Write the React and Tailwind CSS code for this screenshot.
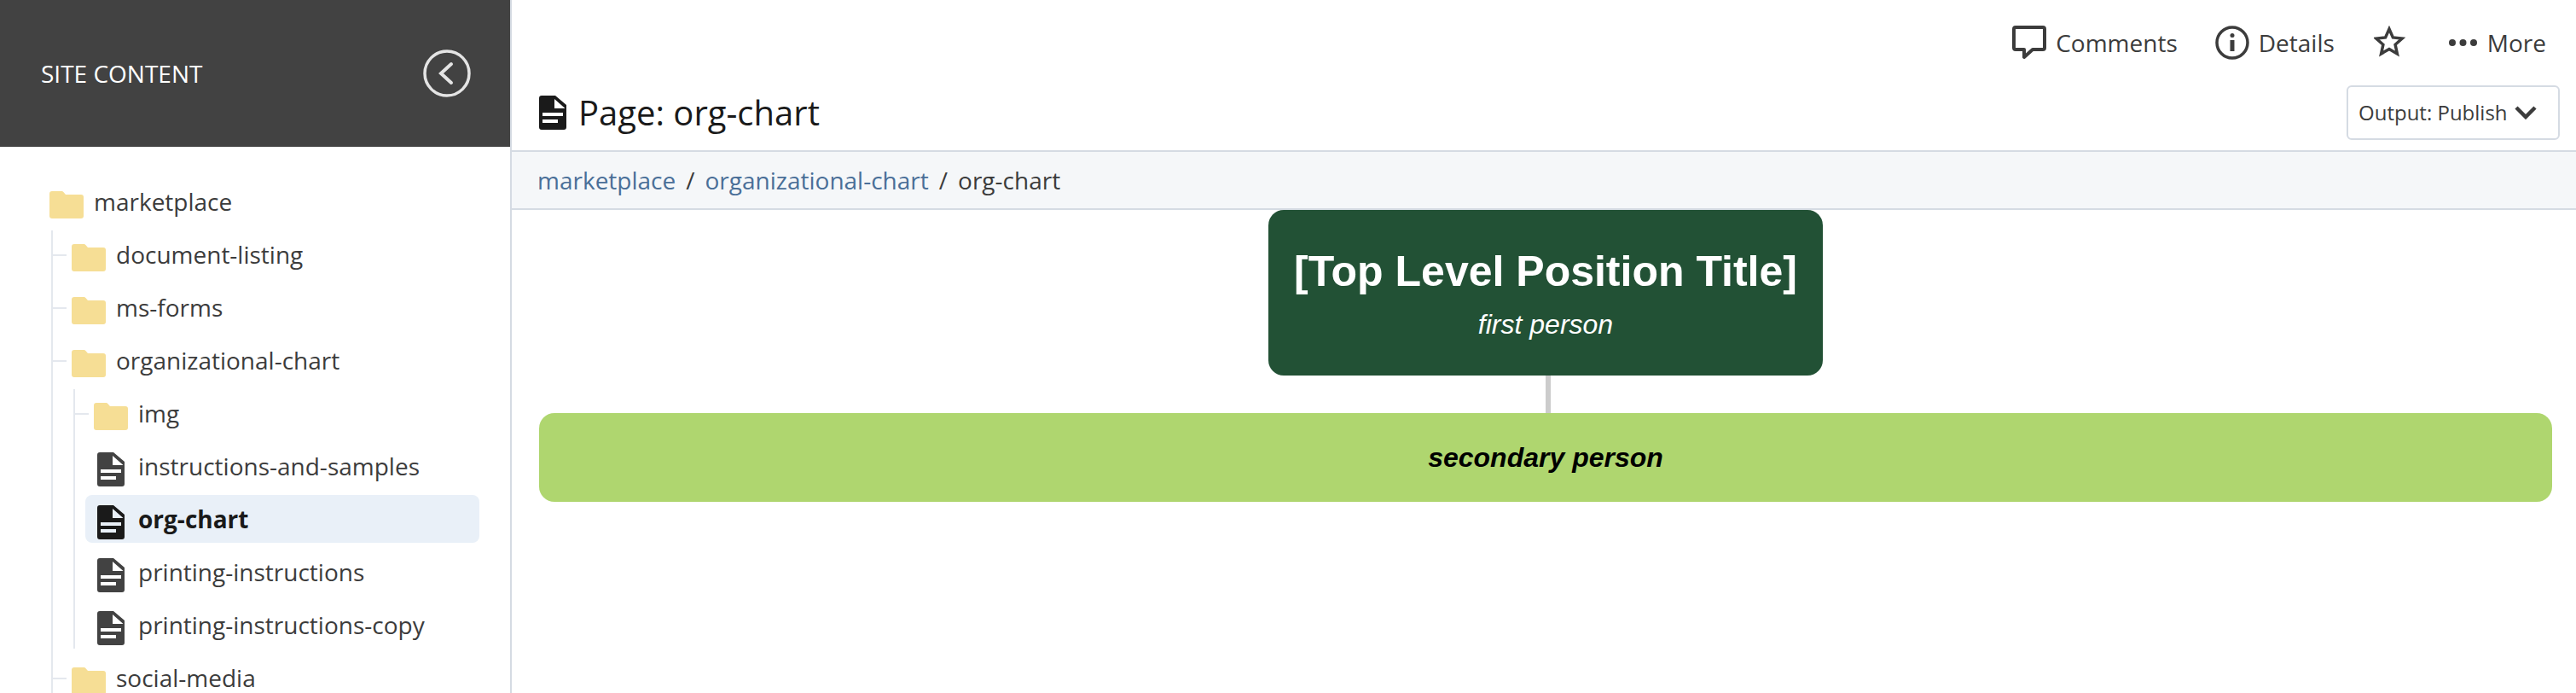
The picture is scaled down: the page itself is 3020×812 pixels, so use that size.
import React from 'react';

const FolderIcon = () => (
  <svg className="w-10 h-8 mt-[8px] shrink-0" viewBox="0 0 40 32" fill="#f6de95">
    <path d="M3 0h11c1 0 2 .4 2.6 1.2L19 4h18a3 3 0 013 3v22a3 3 0 01-3 3H3a3 3 0 01-3-3V3a3 3 0 013-3z" />
  </svg>
);

const FileIcon = ({ color = '#424242', className = 'mt-[8px]' }) => (
  <svg className={`w-8 h-10 shrink-0 ${className}`} viewBox="0 0 32 40" fill={color}>
    <path
      fillRule="evenodd"
      d="M3 0H19L32 11V37a3 3 0 01-3 3H3a3 3 0 01-3-3V3a3 3 0 013-3zM18 4V15H30.500zM4 20v4h24v-4zM4 28v4h18v-4z"
    />
  </svg>
);

const Row = ({ type, label, active }) => (
  <div className={`flex items-center h-[56px] ${active ? 'font-bold text-[#1a1a1a]' : 'text-[#3c3c3c]'}`}>
    {type === 'folder' ? <FolderIcon /> : <FileIcon color={active ? '#1a1a1a' : '#424242'} />}
    <span className={type === 'folder' ? 'ml-3' : 'ml-4'}>{label}</span>
  </div>
);

// one branch of the tree, with its tick mark going back to the parent's line
const Branch = ({ children }) => (
  <li className="relative mt-[6px] first:mt-0">
    <span className="absolute left-0 top-[28px] w-[16px] h-[2px] bg-[#e4e8ee]" />
    {children}
  </li>
);

const Tree = () => (
  <div className="pl-[58px] pt-[36px] text-[28px] leading-[56px]">
    <Row type="folder" label="marketplace" />
    <ul className="ml-[2px] mt-[6px] border-l-2 border-[#e4e8ee]">
      {['document-listing', 'ms-forms'].map((name) => (
        <Branch key={name}>
          <div className="pl-[22px]"><Row type="folder" label={name} /></div>
        </Branch>
      ))}
      <Branch>
        <div className="pl-[22px]"><Row type="folder" label="organizational-chart" /></div>
        <ul className="ml-[24px] mt-[6px] border-l-2 border-[#e4e8ee]">
          <Branch><div className="pl-[22px]"><Row type="folder" label="img" /></div></Branch>
          <li className="mt-[6px] pl-[26px]"><Row type="file" label="instructions-and-samples" /></li>
          <li className="mt-[6px] pl-[12px]">
            <div className="w-[462px] pl-[14px] rounded-lg bg-[#e9f0f8]"><Row type="file" label="org-chart" active /></div>
          </li>
          <li className="mt-[6px] pl-[26px]"><Row type="file" label="printing-instructions" /></li>
          <li className="mt-[6px] pl-[26px]"><Row type="file" label="printing-instructions-copy" /></li>
        </ul>
      </Branch>
      <Branch>
        <div className="pl-[22px]"><Row type="folder" label="social-media" /></div>
      </Branch>
    </ul>
  </div>
);

const Sidebar = () => (
  <aside className="w-[600px] h-full shrink-0 flex flex-col border-r-2 border-[#d5dbe3] overflow-hidden">
    <div className="w-[600px] h-[172px] shrink-0 bg-[#424242] flex items-center justify-between pl-[48px] pr-[48px]">
      <span className="text-white text-[28px]">SITE CONTENT</span>
      <svg className="w-[56px] h-[56px]" viewBox="0 0 56 56" fill="none" stroke="#e4e4e4" strokeWidth="3.5" strokeLinecap="round">
        <circle cx="28" cy="28" r="26" />
        <path d="M33 17L21 28l12 11" strokeWidth="4" />
      </svg>
    </div>
    <div className="flex-1 min-h-0 overflow-hidden"><Tree /></div>
  </aside>
);

const Action = ({ icon, label, gap }) => (
  <div className={`flex items-center ${gap}`}>
    {icon}
    <span>{label}</span>
  </div>
);

const Header = () => (
  <header className="h-[176px] shrink-0 flex flex-col text-[#3c3c3c]">
    <div className="flex justify-end items-center pt-[30px] pr-[35px] text-[28px] leading-[40px]">
      <Action
        gap="gap-[11px]"
        label="Comments"
        icon={
          <svg className="w-[40px] h-[40px]" viewBox="0 0 40 40" fill="none" stroke="#3c3c3c" strokeWidth="4" strokeLinejoin="round">
            <path d="M4 2h32a2 2 0 012 2v22a2 2 0 01-2 2H24l-10 9v-9H4a2 2 0 01-2-2V4a2 2 0 012-2z" />
          </svg>
        }
      />
      <div className="ml-[44px]">
        <Action
          gap="gap-[11px]"
          label="Details"
          icon={
            <svg className="w-[40px] h-[40px]" viewBox="0 0 40 40" fill="none" stroke="#3c3c3c" strokeWidth="3.5">
              <circle cx="20" cy="20" r="18" />
              <circle cx="20" cy="11.5" r="2.5" fill="#3c3c3c" stroke="none" />
              <path d="M20 17v13" strokeWidth="5" />
            </svg>
          }
        />
      </div>
      <svg className="w-[40px] h-[40px] ml-[46px] mr-[48px]" viewBox="0 0 40 40" fill="none" stroke="#3c3c3c" strokeWidth="3.5" strokeLinejoin="miter">
        <path d="M18 4l4.400 9.900 10.800 1.200-8.100 7.200 2.300 10.600L18 27.500 8.600 32.900l2.300-10.600-8.100-7.200 10.800-1.200z" />
      </svg>
      <Action
        gap="gap-[12px]"
        label="More"
        icon={
          <svg className="w-[33px] h-[8px]" viewBox="0 0 33 8" fill="#3c3c3c">
            <circle cx="4" cy="4" r="4" />
            <circle cx="16.500" cy="4" r="4" />
            <circle cx="29" cy="4" r="4" />
          </svg>
        }
      />
    </div>
    <div className="flex items-start justify-between pl-[32px] pr-[19px] mt-[30px]">
      <div className="flex items-center gap-[14px] mt-[12px] text-[40px] leading-[40px] text-[#1a1a1a]">
        <FileIcon color="#1a1a1a" className="" />
        <span>Page: org-chart</span>
      </div>
      <div className="w-[250px] h-[64px] flex items-center justify-between pl-[12px] pr-[25px] border-2 border-[#d5dbe3] rounded-md text-[24px]">
        <span>Output: Publish</span>
        <svg className="w-[26px] h-[16px]" viewBox="0 0 26 16" fill="none" stroke="#3c3c3c" strokeWidth="4.500">
          <path d="M2 2l11 11L24 2" />
        </svg>
      </div>
    </div>
  </header>
);

const Breadcrumb = () => (
  <nav className="h-[70px] shrink-0 flex items-center gap-[12px] px-[30px] bg-[#f5f7f9] border-y-2 border-[#d5dbe3] text-[28px]">
    <span className="text-[#4a6f98]">marketplace</span>
    <span className="text-[#3c3c3c]">/</span>
    <span className="text-[#4a6f98]">organizational-chart</span>
    <span className="text-[#3c3c3c]">/</span>
    <span className="text-[#3c3c3c]">org-chart</span>
  </nav>
);

const OrgChart = () => (
  <div className="flex flex-col items-center pl-[32px] pr-[28px] font-['Liberation_Sans',sans-serif]">
    <div className="w-[650px] h-[194px] flex flex-col items-center pt-[40px] rounded-[18px] bg-[#225135] text-white">
      <div className="text-[50px] leading-[64px] font-bold">[Top Level Position Title]</div>
      <div className="mt-[8px] text-[32px] leading-[44px] italic">first person</div>
    </div>
    <div className="w-[6px] h-[44px] ml-[6px] bg-[#cccccc]" />
    <div className="w-full h-[104px] flex items-center justify-center rounded-[18px] bg-[#afd66f] text-black text-[32px] font-bold italic">
      secondary person
    </div>
  </div>
);

export default function App() {
  return (
    <div className="flex w-[3020px] h-[812px] bg-white overflow-hidden font-['Open_Sans',sans-serif]">
      <Sidebar />
      <main className="flex-1 min-w-0 flex flex-col">
        <Header />
        <Breadcrumb />
        <OrgChart />
      </main>
    </div>
  );
}
